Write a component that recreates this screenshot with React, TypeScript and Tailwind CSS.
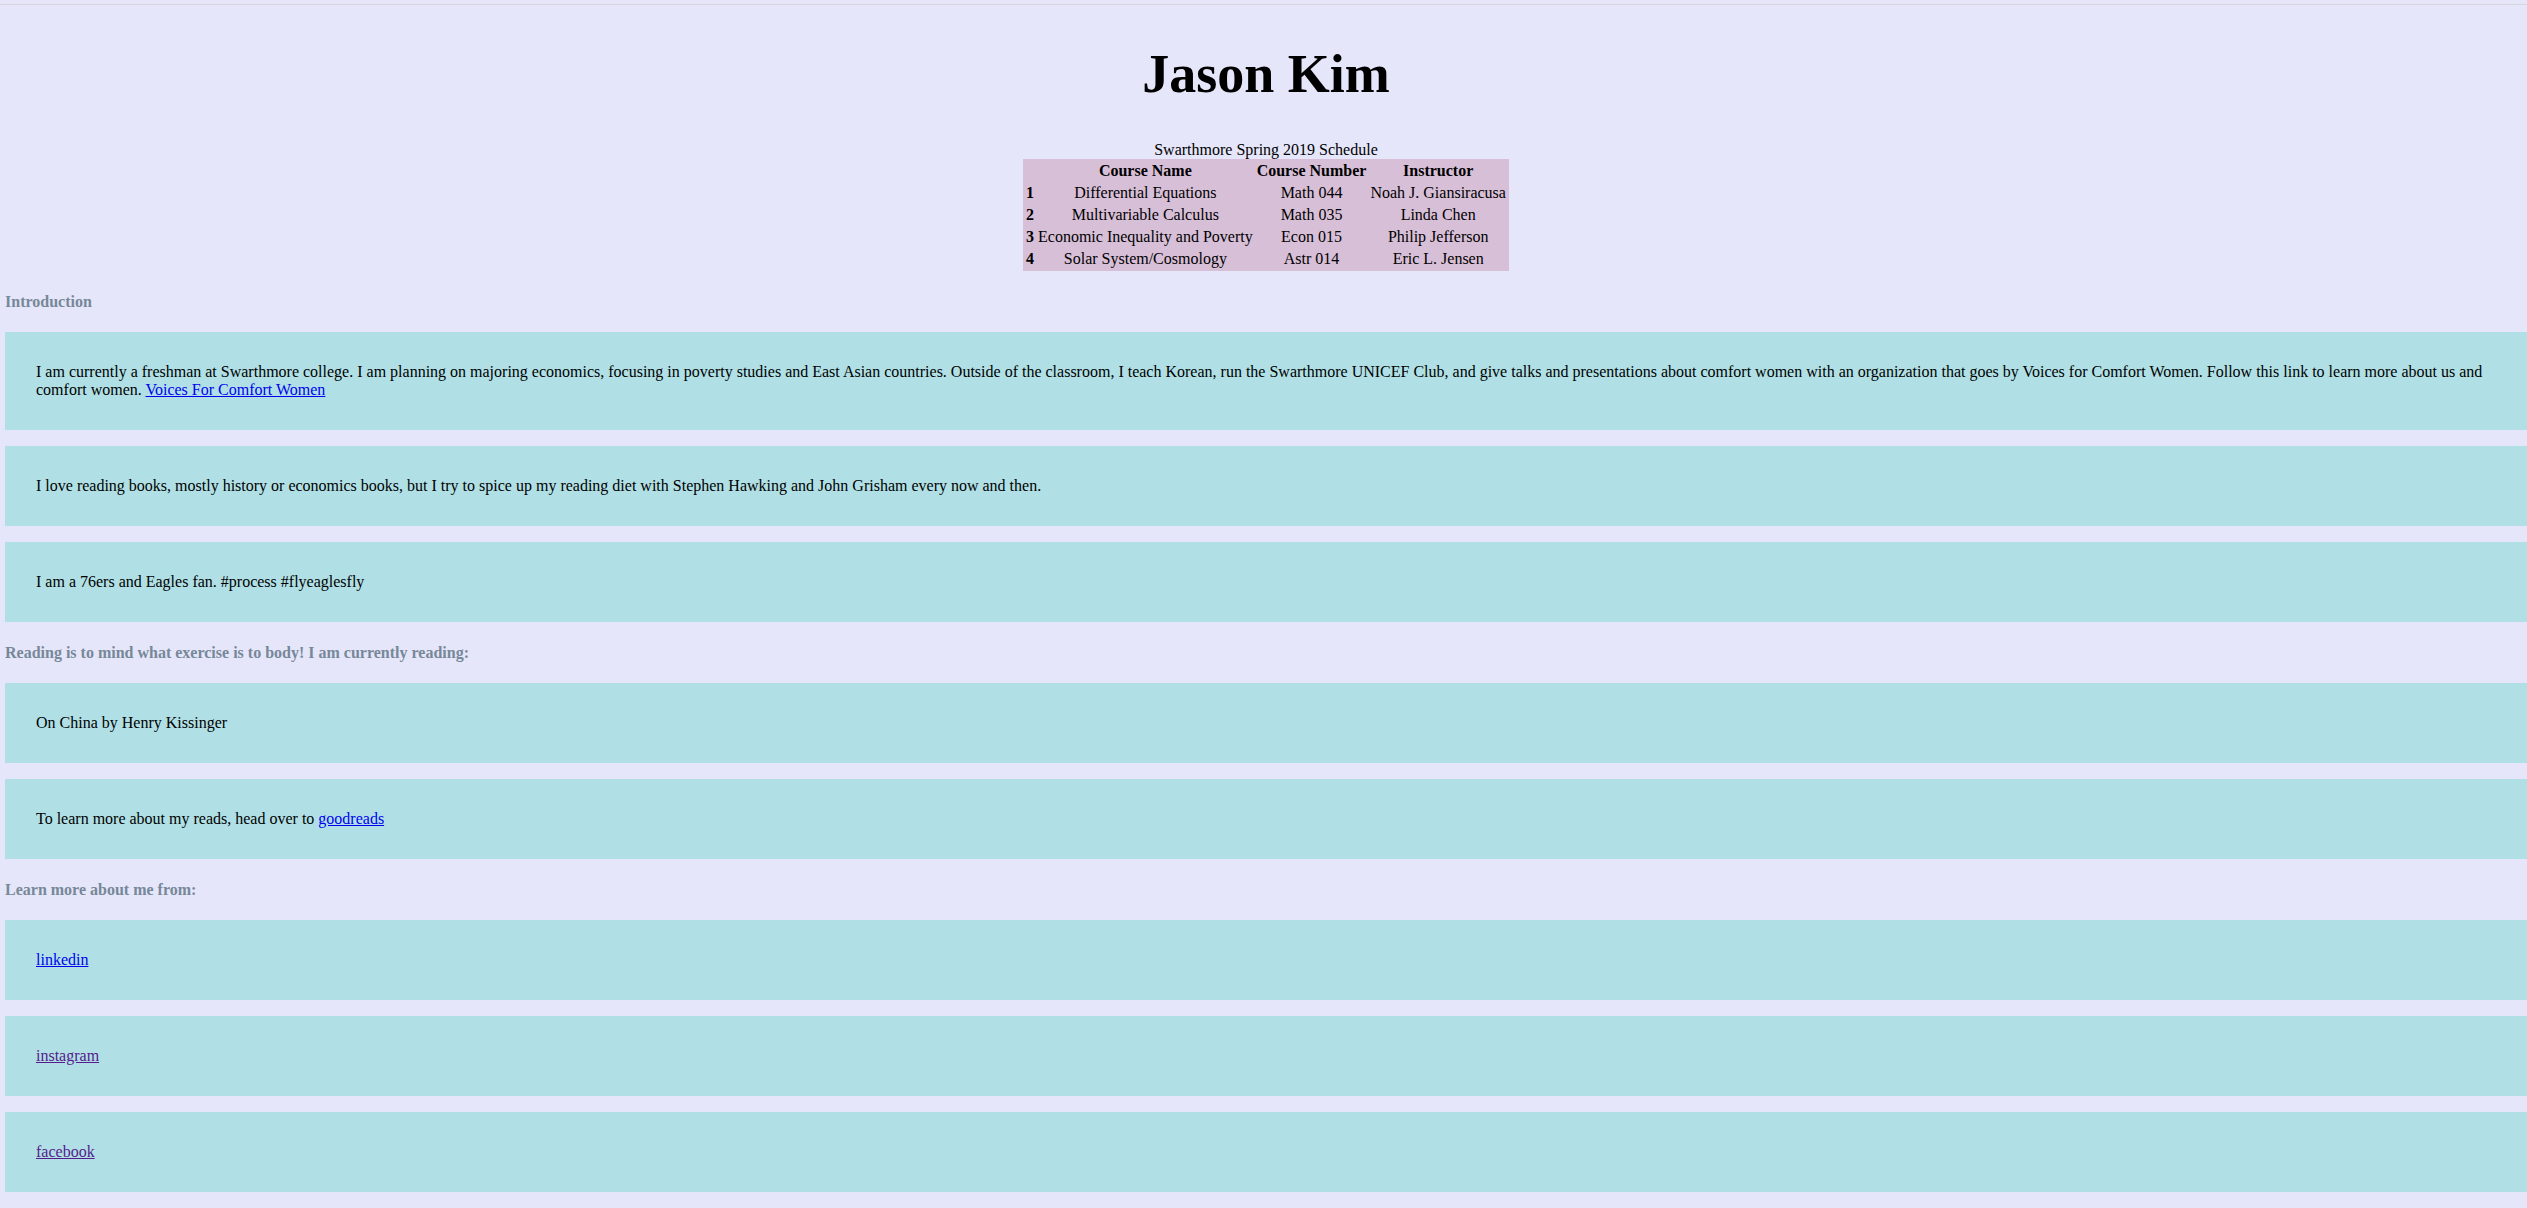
import React from "react";

const courses = [
  ["1", "Differential Equations", "Math 044", "Noah J. Giansiracusa"],
  ["2", "Multivariable Calculus", "Math 035", "Linda Chen"],
  ["3", "Economic Inequality and Poverty", "Econ 015", "Philip Jefferson"],
  ["4", "Solar System/Cosmology", "Astr 014", "Eric L. Jensen"],
];

function H5({ children }: { children: React.ReactNode }) {
  return (
    <h5 className="mt-[22px] mb-[21px] text-[16px] font-bold leading-[normal] text-[#778899]">
      {children}
    </h5>
  );
}

function Box({ children }: { children: React.ReactNode }) {
  return (
    <p className="my-4 bg-[#B0E0E6] px-[31px] py-[31px] leading-[normal]">{children}</p>
  );
}

function A({ children, visited }: { children: React.ReactNode; visited?: boolean }) {
  return (
    <a
      href="#"
      className={visited ? "text-[#551A8B] underline" : "text-[#0000EE] underline"}
    >
      {children}
    </a>
  );
}

export default function App() {
  return (
    <div className="min-h-screen overflow-hidden bg-[#E6E6FA] font-['Liberation_Serif',serif] text-[16px] leading-[normal] text-black">
      <div className="h-[4px]" />
      <div className="h-px bg-[#d6d6d6]" />
      <div className="pl-[5px] pb-[10px] pt-px">
        <h1 className="mt-[37px] mb-[36px] text-center text-[54px] font-bold leading-[normal]">
          Jason Kim
        </h1>
        <table className="mx-auto border-separate border-spacing-[2px] bg-[#D8BFD8] text-center">
          <caption className="bg-[#E6E6FA]">Swarthmore Spring 2019 Schedule</caption>
          <thead>
            <tr>
              <th className="p-px"></th>
              <th className="p-px text-center font-bold">Course Name</th>
              <th className="p-px text-center font-bold">Course Number</th>
              <th className="p-px text-center font-bold">Instructor</th>
            </tr>
          </thead>
          <tbody>
            {courses.map((c) => (
              <tr key={c[0]}>
                <th className="p-px text-center font-bold">{c[0]}</th>
                <td className="p-px">{c[1]}</td>
                <td className="p-px">{c[2]}</td>
                <td className="p-px">{c[3]}</td>
              </tr>
            ))}
          </tbody>
        </table>

        <H5>Introduction</H5>
        <Box>
          I am currently a freshman at Swarthmore college. I am planning on majoring economics, focusing in
          poverty studies and East Asian countries. Outside of the classroom, I teach Korean, run the Swarthmore
          UNICEF Club, and give talks and presentations about comfort women with an organization that goes by
          Voices for Comfort Women. Follow this link to learn more about us and comfort women.{" "}
          <A>Voices For Comfort Women</A>
        </Box>
        <Box>
          I love reading books, mostly history or economics books, but I try to spice up my reading diet with
          Stephen Hawking and John Grisham every now and then.
        </Box>
        <Box>I am a 76ers and Eagles fan. #process #flyeaglesfly</Box>

        <H5>Reading is to mind what exercise is to body! I am currently reading:</H5>
        <Box>On China by Henry Kissinger</Box>
        <Box>
          To learn more about my reads, head over to <A>goodreads</A>
        </Box>

        <H5>Learn more about me from:</H5>
        <Box>
          <A>linkedin</A>
        </Box>
        <Box>
          <A visited>instagram</A>
        </Box>
        <Box>
          <A visited>facebook</A>
        </Box>
      </div>
    </div>
  );
}
